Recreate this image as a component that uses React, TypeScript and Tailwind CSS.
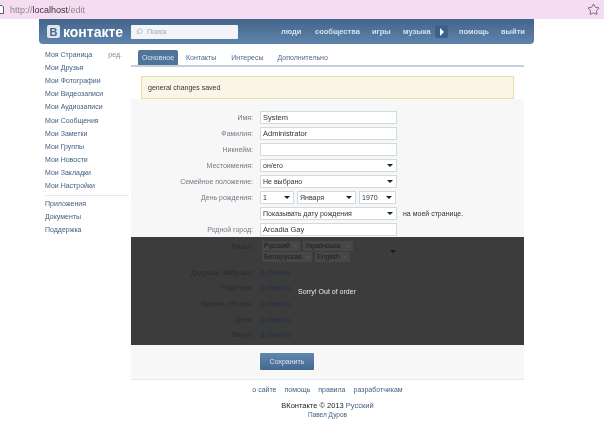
import { Star, Search } from 'lucide-react';

const sideTop = ['Мои Друзья', 'Мои Фотографии', 'Мои Видеозаписи', 'Мои Аудиозаписи', 'Мои Сообщения', 'Мои Заметки', 'Мои Группы', 'Мои Новости', 'Мои Закладки', 'Мои Настройки'];
const sideBottom = ['Приложения', 'Документы', 'Поддержка'];

const Label = ({ children }: { children?: string }) => (
  <div className="w-[122px] shrink-0 text-right text-[#6f7c88]">{children}</div>
);

const Field = ({ value = '' }: { value?: string }) => (
  <div className="h-[13px] w-[137px] border border-[#d0dae2] bg-white pl-[2px] text-[7.5px] leading-[11px] text-[#333333]">{value}</div>
);

const Select = ({ value, w }: { value: string; w: string }) => (
  <div className={`flex h-[13px] items-center justify-between border border-[#d0dae2] bg-white pl-[2px] pr-[2px] leading-[11px] text-[#333333] ${w}`}>
    <span>{value}</span>
    <span className="mr-[1px] h-0 w-0 border-x-[3px] border-t-[3px] border-x-transparent border-t-[#222222]" />
  </div>
);

const Row = ({ label, children }: { label?: string; children: React.ReactNode }) => (
  <div className="flex h-[13px] items-center gap-[7px]">
    <Label>{label}</Label>
    {children}
  </div>
);

const Chip = ({ text, w }: { text: string; w: string }) => (
  <span className={`flex h-[10px] items-center justify-between bg-[#474747] pl-[2px] pr-[3px] text-[#1d1d1d] ${w}`}>
    {text}
    <span className="text-[5px] text-[#5a5a5a]">✕</span>
  </span>
);

const Relative = ({ label, top }: { label: string; top: string }) => (
  <div className={`flex items-center gap-[7px] ${top}`}>
    <div className="w-[122px] shrink-0 text-right text-[#2b2b2b]">{label}</div>
    <span className="text-[#243240]">Добавить</span>
  </div>
);

export default function App() {
  return (
    <div className="relative h-[424px] w-[604px] overflow-hidden bg-white text-[7px] leading-[10px] blur-[0.35px] [font-family:'Liberation_Sans',sans-serif]">
      {/* browser bar */}
      <div className="flex h-[19px] items-center justify-between bg-[#f5dcf3] pr-[4px] text-[9px] text-[#8a8a8a]">
        <div className="flex items-center gap-[6px]">
          <svg width="4" height="9" viewBox="0 0 4 9" className="text-[#333333]">
            <path d="M0 .5h2l1.5 1.5v6.5H0" fill="#ffffff" stroke="currentColor" strokeWidth="0.8" />
          </svg>
          <span>
            http://<span className="text-[#333333]">localhost</span>/edit
          </span>
        </div>
        <Star size={13} strokeWidth={1.3} className="text-[#444444]" />
      </div>

      {/* vk header */}
      <div className="ml-[39px] flex h-[25px] w-[495px] items-center rounded-b-[4px] bg-gradient-to-b from-[#44658c] to-[#5f84ac] pl-[8px]">
        <div className="flex h-[13px] w-[13px] items-center justify-center rounded-[2px] bg-[#dfe6ee] text-[11px] font-bold text-[#45688e]">В</div>
        <span className="ml-[3px] w-[61px] text-[14px] font-bold text-white">контакте</span>
        <div className="ml-[7px] flex h-[14px] w-[107px] items-center gap-[4px] rounded-[1px] bg-[#f2f4f7] pl-[5px] text-[#9aa5b1]">
          <Search size={7} className="-scale-x-100" />
          Поиск
        </div>
        <nav className="ml-[43px] flex items-center text-[7.5px] font-bold text-[#d5e0eb]">
          <span className="w-[34px]">люди</span>
          <span className="w-[57px]">сообщества</span>
          <span className="w-[31px]">игры</span>
          <span className="w-[32px]">музыка</span>
          <span className="flex h-[13px] w-[13px] items-center justify-center rounded-[2px] bg-[#3f6189]">
            <span className="h-0 w-0 border-y-[4px] border-l-[4px] border-y-transparent border-l-white" />
          </span>
          <span className="ml-[11px] w-[42px]">помощь</span>
          <span>выйти</span>
        </nav>
      </div>

      <div className="flex">
        {/* sidebar */}
        <aside className="ml-[45px] w-[86px] shrink-0 pt-[4px] text-[#3f5f80]">
          <div className="flex h-[13.2px] items-center justify-between pr-[9px]">
            <span>Моя Страница</span>
            <span className="text-[#7d8f9f]">ред.</span>
          </div>
          {sideTop.map((item) => (
            <div key={item} className="flex h-[13.2px] items-center">{item}</div>
          ))}
          <div className="mt-[2px] mb-[1px] mr-[2px] h-px bg-[#e6e9ed]" />
          {sideBottom.map((item) => (
            <div key={item} className="flex h-[13.2px] items-center">{item}</div>
          ))}
        </aside>

        {/* content */}
        <main className="relative h-[336px] w-[393px] border-b border-[#e6e9ed] bg-[#f7f7f7]">
          <div className="flex h-[23px] items-end border-b-2 border-[#c5d0dc] bg-white pl-[7px] text-[#4a6a8a]">
            <span className="flex h-[15px] w-[40px] items-center justify-center rounded-t-[2px] bg-[#4f7399] text-[#dde6ef]">Основное</span>
            <span className="ml-[8px] flex h-[15px] items-center">Контакты</span>
            <span className="ml-[15px] flex h-[15px] items-center">Интересы</span>
            <span className="ml-[14px] flex h-[15px] items-center">Дополнительно</span>
          </div>

          <div className="bg-white px-[10px] pt-[9px]">
            <div className="flex h-[23px] items-center border border-[#e9dfa5] bg-[#f9f6e7] pl-[6px] text-[#333333]">general changes saved</div>
          </div>

          <div className="mt-[12px] flex flex-col gap-[3px]">
            <Row label="Имя:"><Field value="System" /></Row>
            <Row label="Фамилия:"><Field value="Administrator" /></Row>
            <Row label="Никнейм:"><Field /></Row>
            <Row label="Местоимения:"><Select value="он/его" w="w-[137px]" /></Row>
            <Row label="Семейное положение:"><Select value="Не выбрано" w="w-[137px]" /></Row>
            <Row label="День рождения:">
              <div className="flex gap-[3px]">
                <Select value="1" w="w-[34px]" />
                <Select value="Января" w="w-[59px]" />
                <Select value="1970" w="w-[37px]" />
              </div>
            </Row>
            <Row label="">
              <Select value="Показывать дату рождения" w="w-[137px]" />
              <span className="-ml-px text-[#333333]">на моей странице.</span>
            </Row>
            <Row label="Родной город:"><Field value="Arcadia Gay" /></Row>
          </div>

          {/* out of order overlay */}
          <div className="absolute inset-x-0 top-[193px] h-[108px] bg-[#3c3c3c] pt-[4px]">
            <div className="flex gap-[7px]">
              <div className="w-[122px] shrink-0 pt-[1px] text-right text-[#2b2b2b]">Языки:</div>
              <div className="flex h-[21px] w-[137px] items-center justify-between">
                <div className="flex w-[112px] flex-wrap gap-y-[1px] gap-x-[3px] pl-[2px]">
                  <Chip text="Русский" w="w-[38px]" />
                  <Chip text="Українська" w="w-[50px]" />
                  <Chip text="Беларуская" w="w-[50px]" />
                  <Chip text="English" w="w-[35px]" />
                </div>
                <span className="mr-[1px] h-0 w-0 border-x-[3px] border-t-[3px] border-x-transparent border-t-[#1a1a1a]" />
              </div>
            </div>
            <Relative label="Дедушки, бабушки:" top="mt-[6px]" />
            <Relative label="Родители:" top="mt-[5px]" />
            <Relative label="Братья, сёстры:" top="mt-[6px]" />
            <Relative label="Дети:" top="mt-[6px]" />
            <Relative label="Внуки:" top="mt-[5px]" />
            <span className="absolute left-[167px] top-[50px] text-[#e8e8e8]">Sorry! Out of order</span>
          </div>

          <div className="absolute left-[129px] top-[309px] flex h-[17px] w-[54px] items-center justify-center rounded-[1px] bg-gradient-to-b from-[#6087ae] to-[#45688f] text-[#dbe4ed]">Сохранить</div>
        </main>
      </div>

      {/* footer */}
      <footer className="ml-[131px] mt-[5px] w-[393px] text-center">
        <div className="flex justify-center gap-[8px] text-[#3f5f80]">
          <span>о сайте</span>
          <span>помощь</span>
          <span>правила</span>
          <span>разработчикам</span>
        </div>
        <div className="mt-[6px] text-[7.5px] text-[#222222]">
          ВКонтакте © 2013 <span className="text-[#3f5f80]">Русский</span>
        </div>
        <div className="-mt-px text-[6.5px] text-[#3f5f80]">Павел Дуров</div>
      </footer>
    </div>
  );
}
